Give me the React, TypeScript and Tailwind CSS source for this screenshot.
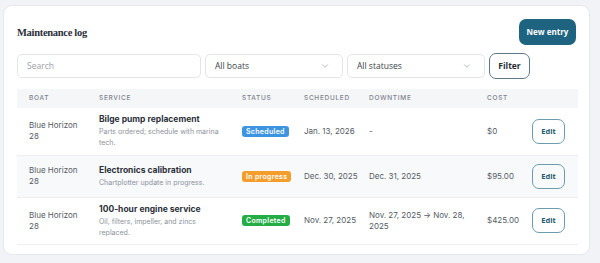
import { ChevronDown } from 'lucide-react';

type Row = {
  boat: string;
  title: string;
  note: string;
  status: 'Scheduled' | 'In progress' | 'Completed';
  scheduled: string;
  downtime: string;
  cost: string;
};

const rows: Row[] = [
  {
    boat: 'Blue Horizon 28',
    title: 'Bilge pump replacement',
    note: 'Parts ordered; schedule with marina tech.',
    status: 'Scheduled',
    scheduled: 'Jan. 13, 2026',
    downtime: '-',
    cost: '$0',
  },
  {
    boat: 'Blue Horizon 28',
    title: 'Electronics calibration',
    note: 'Chartplotter update in progress.',
    status: 'In progress',
    scheduled: 'Dec. 30, 2025',
    downtime: 'Dec. 31, 2025',
    cost: '$95.00',
  },
  {
    boat: 'Blue Horizon 28',
    title: '100-hour engine service',
    note: 'Oil, filters, impeller, and zincs replaced.',
    status: 'Completed',
    scheduled: 'Nov. 27, 2025',
    downtime: 'Nov. 27, 2025 → Nov. 28, 2025',
    cost: '$425.00',
  },
];

const badgeColors = {
  Scheduled: 'bg-[#3d95e2]',
  'In progress': 'bg-[#f49d2c]',
  Completed: 'bg-[#24ad45]',
};

const sans = { fontFamily: 'Inter, "Noto Sans", sans-serif' };

const App = () => {
  return (
    <div className="min-h-screen bg-[#f2f3f7] pt-[5px] pl-[3px] pr-[10px]" style={{ fontFamily: '"Open Sans", "Noto Sans", sans-serif' }}>
      <div className="h-[250px] rounded-[9px] border border-[#e6e8ee] bg-white px-[13px] pt-[13px]">
        <div className="flex items-center justify-between">
          <h1 className="pt-[2px] text-[10.5px] font-bold text-[#2a2f3a]" style={{ fontFamily: '"Liberation Serif", "DejaVu Serif", serif', letterSpacing: '-0.3px' }}>
            Maintenance log
          </h1>
          <button className="h-[26px] w-[57px] rounded-[7px] bg-[#1e6480] text-[8px] font-bold text-white">
            New entry
          </button>
        </div>

        <div className="mt-[8px] flex items-center gap-[4px]">
          <div className="flex h-[24px] w-[184px] items-center rounded-[5px] border border-[#e3e5ea] px-[9px] text-[8.5px] text-[#9aa0a8]">
            Search
          </div>
          <div className="flex h-[24px] w-[138px] items-center justify-between rounded-[5px] border border-[#e3e5ea] pl-[9px] pr-[12px] text-[8.5px] text-[#3a3f47]">
            All boats
            <ChevronDown size={10} strokeWidth={1.5} className="text-[#8a9099]" />
          </div>
          <div className="flex h-[24px] w-[138px] items-center justify-between rounded-[5px] border border-[#e3e5ea] pl-[9px] pr-[12px] text-[8.5px] text-[#3a3f47]">
            All statuses
            <ChevronDown size={10} strokeWidth={1.5} className="text-[#8a9099]" />
          </div>
          <button className="h-[26px] w-[41px] rounded-[7px] border border-[#5f7888] text-[8.5px] font-bold text-[#1f2d36]">
            Filter
          </button>
        </div>

        <table className="mt-[10px] w-[561px] table-fixed border-collapse text-left" style={sans}>
          <thead>
            <tr className="h-[19px] bg-[#f5f6f8] text-[6.5px] uppercase tracking-[0.7px] text-[#7c828c]">
              <th className="w-[82px] pl-[12px] font-medium">Boat</th>
              <th className="w-[143px] font-medium">Service</th>
              <th className="w-[62px] font-medium">Status</th>
              <th className="w-[65px] font-medium">Scheduled</th>
              <th className="w-[118px] font-medium">Downtime</th>
              <th className="w-[45px] font-medium">Cost</th>
              <th></th>
            </tr>
          </thead>
          <tbody>
            {rows.map((r, i) => (
              <tr
                key={r.title}
                className={`border-b border-[#eceef1] text-[8px] leading-[11px] text-[#555b64] ${i === 1 ? 'bg-[#f8f9fb]' : ''} ${i === 1 ? 'h-[42px]' : 'h-[47px]'}`}
              >
                <td className="pl-[12px] pr-[8px]">
                  <div className="w-[52px]">{r.boat}</div>
                </td>
                <td className="pr-[6px]">
                  <div className="text-[8.5px] font-bold text-[#2c313a]">{r.title}</div>
                  <div className="mt-[1px] w-[128px] text-[7px] leading-[11px] text-[#8c929b]">{r.note}</div>
                </td>
                <td>
                  <span className={`inline-block rounded-[3px] px-[4px] text-[7px] leading-[11px] font-semibold tracking-[0.3px] text-white ${badgeColors[r.status]}`}>
                    {r.status}
                  </span>
                </td>
                <td className="pr-[6px]">{r.scheduled}</td>
                <td className="pr-[6px]">{r.downtime}</td>
                <td>{r.cost}</td>
                <td>
                  <button className="h-[25px] w-[33px] rounded-[7px] border border-[#6c9cae] text-[7.5px] font-bold text-[#1d5a70]" style={{ fontFamily: '"Open Sans", sans-serif' }}>
                    Edit
                  </button>
                </td>
              </tr>
            ))}
          </tbody>
        </table>
      </div>
    </div>
  );
};

export default App;
